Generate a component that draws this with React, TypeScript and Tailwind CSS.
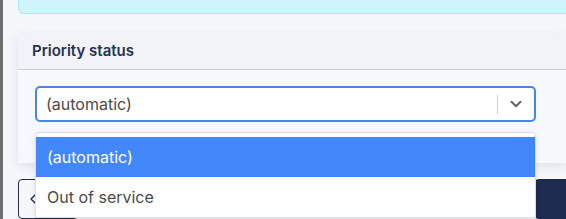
import { ChevronDown, ChevronLeft } from 'lucide-react';

export default function App() {
  return (
    <div className="flex h-[219px] overflow-hidden bg-[#f6f7fb] font-['Inter',sans-serif]">
      <div className="w-[3px] shrink-0 bg-[#6e6e6e]" />
      <div className="flex min-w-0 flex-1 flex-col pl-[15px]">
        <div className="h-[14px] shrink-0 rounded-bl-md border-b border-l border-[#a6e9f7] bg-[#cff4fc]" />

        <div className="relative mt-[19px] shrink-0 bg-[#f7f8fc] shadow-[0_3px_10px_rgba(30,40,70,0.10)]">
          <div className="flex h-[37px] items-center border-b border-[#cbced6] bg-[#f2f3f9] px-[14px] text-[15px] font-semibold text-[#273152]">
            Priority status
          </div>
          <div className="px-[17px] pb-[41px] pt-[16px]">
            <div className="flex h-[36px] w-[501px] items-center rounded-[5px] border-2 border-[#4a85e6] bg-white">
              <span className="flex-1 pl-[9px] text-[16px] text-[#4a4a4a]">(automatic)</span>
              <span className="h-[19px] w-px bg-[#cfcfcf]" />
              <span className="flex w-[36px] items-center justify-center text-[#666]">
                <ChevronDown size={18} strokeWidth={2.75} />
              </span>
            </div>
            <div className="absolute left-[17px] top-[99px] z-10 w-[501px] rounded-t-[4px] border border-[#dcdde2] bg-white pt-[4px] shadow-[0_2px_6px_rgba(0,0,0,0.08)]">
              <div className="flex h-[40px] items-center bg-[#4388fa] px-[11px] text-[16px] text-white">(automatic)</div>
              <div className="flex h-[40px] items-center px-[11px] text-[16px] text-[#4a4a4a]">Out of service</div>
            </div>
          </div>
        </div>

        <div className="mt-[16px] flex shrink-0 items-start justify-between">
          <button type="button" className="flex h-[40px] w-[60px] items-center rounded-[4px] border border-[#1f2b4f] pl-[6px] text-[#1f2b4f]">
            <ChevronLeft size={16} />
          </button>
          <button type="button" className="h-[40px] w-[31px] rounded-l-[4px] bg-[#1e2c52]" />
        </div>
      </div>
    </div>
  );
}
